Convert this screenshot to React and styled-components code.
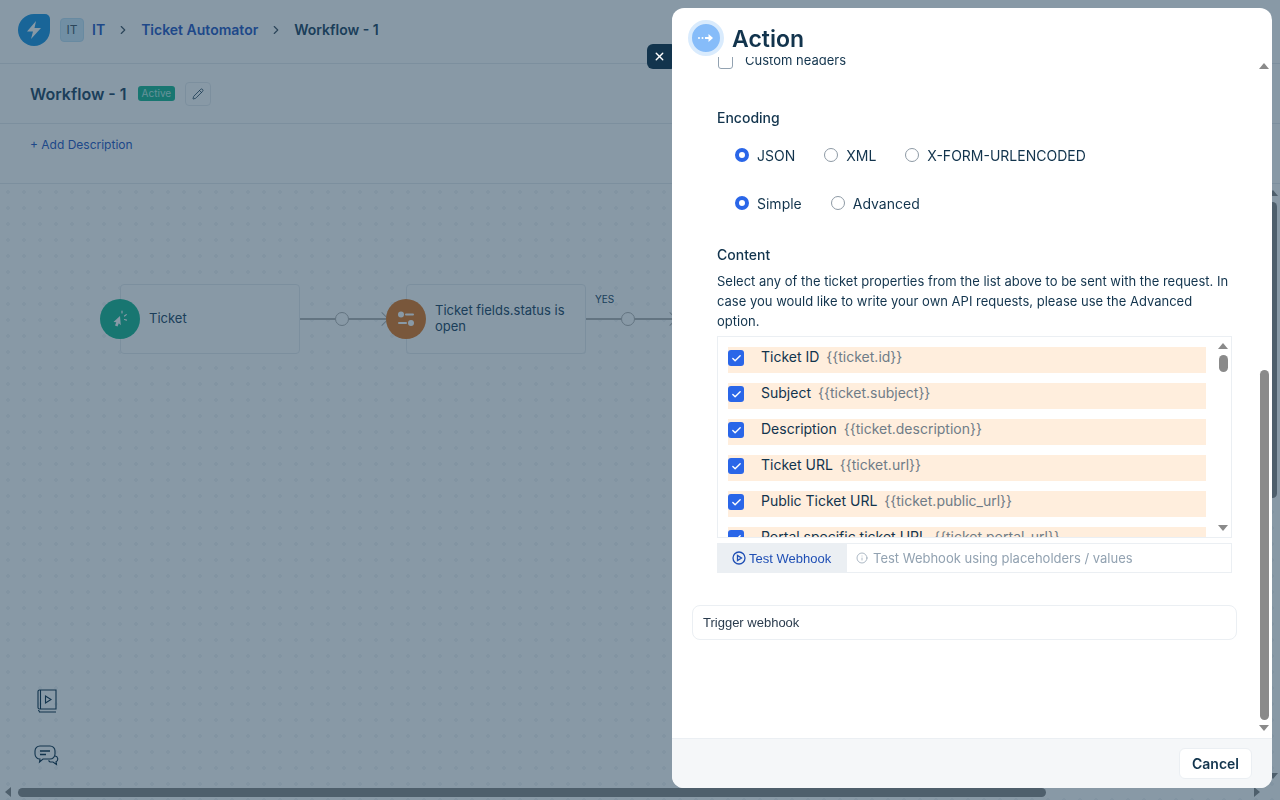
import React from "react";
import styled, { createGlobalStyle } from "styled-components";
import { Check, ChevronRight, Info, Pencil, X } from "lucide-react";

const GlobalStyle = createGlobalStyle`
  html, body {
    margin: 0;
    height: 100%;
    overflow: hidden;
    background: #fff;
    font-family: Inter, "Liberation Sans", sans-serif;
    color: #12344d;
  }
  * {
    box-sizing: border-box;
  }
`;

const Page = styled.div`
  width: 1280px;
  height: 800px;
  display: flex;
  flex-direction: column;
  overflow: hidden;
`;

const TopBar = styled.header`
  height: 64px;
  flex: none;
  display: flex;
  align-items: center;
  padding: 0 0 4px 18px;
  border-bottom: 1px solid #e6ebef;
`;

const Logo = styled.div`
  width: 32px;
  height: 32px;
  margin-right: 10px;
  border-radius: 50% 5px 50% 50%;
  background: #2097e2;
  display: flex;
  align-items: center;
  justify-content: center;
`;

const SpaceBadge = styled.span`
  width: 24px;
  height: 24px;
  margin-right: 8px;
  border-radius: 4px;
  background: #d0eafa;
  border: 1px solid #bfe0f5;
  font-size: 12px;
  color: #475867;
  display: flex;
  align-items: center;
  justify-content: center;
`;

const Crumb = styled.span`
  font-size: 14px;
  font-weight: 600;
  color: ${(p) => (p.$current ? "#264966" : "#2c5cc5")};
`;

const CrumbSep = styled.span`
  width: 18px;
  margin: 0 9px;
  display: flex;
  justify-content: center;
  color: #475867;
`;

const TitleBar = styled.div`
  height: 60px;
  flex: none;
  display: flex;
  align-items: center;
  padding-left: 30px;
  border-bottom: 1px solid #e6ebef;
`;

const Title = styled.h1`
  margin: 0 11px 0 0;
  font-size: 16px;
  font-weight: 600;
  color: #264966;
`;

const StatusBadge = styled.span`
  height: 15px;
  padding: 0 4px;
  margin-right: 10px;
  border-radius: 3px;
  background: #1fb895;
  color: #b9f0e4;
  font-size: 10px;
  line-height: 15px;
`;

const EditButton = styled.span`
  width: 26px;
  height: 24px;
  border: 1px solid #e6ebef;
  border-radius: 4px;
  display: flex;
  align-items: center;
  justify-content: center;
  color: #12344d;
`;

const DescBar = styled.div`
  height: 60px;
  flex: none;
  display: flex;
  align-items: flex-start;
  padding: 13px 0 0 30px;
  border-bottom: 1px solid #e6ebef;
  font-size: 12px;
  line-height: 16px;
  color: #2c5cc5;
`;

const Canvas = styled.main`
  position: relative;
  flex: 1;
  background-color: #fff;
  background-image: radial-gradient(#f3f5f7 2px, transparent 2px);
  background-size: 16px 16px;
`;

const Node = styled.div`
  position: absolute;
  top: ${(p) => p.$y}px;
  left: ${(p) => p.$x}px;
  width: 180px;
  height: 70px;
  padding: 0 16px 2px 28px;
  display: flex;
  align-items: center;
  border: 1px solid #e6ebef;
  border-radius: 4px;
  background: #fff;
  font-size: 13px;
  line-height: 16px;
  color: #264966;
`;

const NodeIcon = styled.span`
  position: absolute;
  left: -21px;
  top: 14px;
  width: 40px;
  height: 40px;
  border-radius: 50%;
  background: ${(p) => p.$color};
  display: flex;
  align-items: center;
  justify-content: center;
`;

const Wire = styled.div`
  position: absolute;
  top: ${(p) => p.$y}px;
  left: ${(p) => p.$x}px;
  width: ${(p) => p.$w}px;
  height: 2px;
  background: #b4b4b4;
`;

const WireDot = styled.span`
  position: absolute;
  left: 35px;
  top: -6px;
  width: 14px;
  height: 14px;
  border-radius: 50%;
  border: 1.5px solid #b4b4b4;
  background: #fff;
`;

const WireHead = styled.span`
  position: absolute;
  right: -1px;
  top: -4px;
  width: 10px;
  height: 10px;
  border-top: 1.5px solid #b4b4b4;
  border-right: 1.5px solid #b4b4b4;
  transform: rotate(45deg);
`;

const WireLabel = styled.span`
  position: absolute;
  left: 595px;
  top: 109px;
  font-size: 10px;
  line-height: 12px;
  color: #264966;
`;

const FloatIcon = styled.span`
  position: absolute;
  left: ${(p) => p.$x}px;
  top: ${(p) => p.$y}px;
  display: flex;
  color: #12344d;
`;

const PageThumb = styled.div`
  position: absolute;
  border-radius: 5px;
  background: #8a8a8a;
  ${(p) =>
    p.$vertical
      ? "right: 3px; top: 18px; width: 9px; height: 296px;"
      : "left: 18px; top: 604px; width: 1028px; height: 9px;"}
`;

const Arrow = styled.span`
  position: absolute;
  left: ${(p) => p.$x}px;
  top: ${(p) => p.$y}px;
  width: 0;
  height: 0;
  border: 5px solid transparent;
  ${(p) => `border-${p.$side}-color: ${p.$color};`}
  ${(p) => `border-${p.$side}-width: 6px;`}
`;

const Overlay = styled.div`
  position: fixed;
  inset: 0;
  background: rgba(18, 52, 77, 0.5);
`;

const CloseTab = styled.button`
  position: fixed;
  left: 647px;
  top: 44px;
  width: 30px;
  height: 25px;
  padding: 0 5px 0 0;
  border: 0;
  border-radius: 6px;
  background: #12344d;
  color: #fff;
  display: flex;
  align-items: center;
  justify-content: center;
`;

const Modal = styled.aside`
  position: fixed;
  left: 672px;
  top: 8px;
  width: 600px;
  height: 780px;
  border-radius: 12px;
  background: #fff;
  display: flex;
  flex-direction: column;
  overflow: hidden;
`;

const ModalHeader = styled.div`
  height: 49px;
  flex: none;
  padding: 12px 0 0 16px;
  display: flex;
  align-items: flex-start;
  gap: 8px;
`;

const HeaderIcon = styled.span`
  width: 36px;
  height: 36px;
  flex: none;
  border-radius: 50%;
  background: #86bcf9;
  border: 4px solid #d9ebfd;
  display: flex;
  align-items: center;
  justify-content: center;
`;

const ModalTitle = styled.h2`
  margin: 1px 0 0;
  font-size: 23px;
  font-weight: 600;
  line-height: 36px;
  color: #12344d;
`;

const ModalBody = styled.div`
  position: relative;
  flex: 1;
  overflow: hidden;
`;

const ScrollContent = styled.div`
  margin-top: -4px;
  padding: 0 40px 0 20px;
`;

const Section = styled.div`
  padding-left: 25px;
`;

const HeaderCheckRow = styled.label`
  height: 16px;
  display: flex;
  align-items: center;
  gap: 12px;
  margin-left: 1px;
  font-size: 13px;
  line-height: 14px;
  color: #12344d;
`;

const EmptyBox = styled.span`
  width: 15px;
  height: 16px;
  flex: none;
  border: 1px solid #92a2b1;
  border-radius: 3px;
`;

const HeaderCheckText = styled.span`
  margin-bottom: 2px;
`;

const Label = styled.div`
  font-size: 14px;
  font-weight: 500;
  line-height: 20px;
  color: #12344d;
  margin-top: ${(p) => p.$top}px;
`;

const RadioRow = styled.div`
  height: 20px;
  margin-top: ${(p) => p.$top}px;
  padding-left: 18px;
  display: flex;
  align-items: center;
  gap: 29px;
`;

const RadioItem = styled.label`
  display: flex;
  align-items: center;
  gap: 8px;
  font-size: 14px;
  color: #12344d;
`;

const RadioDot = styled.span`
  width: 14px;
  height: 14px;
  border-radius: 50%;
  background: #fff;
  border: ${(p) => (p.$on ? "4px solid #2a66e8" : "1px solid #8e9aa5")};
`;

const HelpText = styled.p`
  margin: 6px 0 5px;
  font-size: 13px;
  line-height: 20px;
  color: #12344d;
`;

const PropList = styled.div`
  position: relative;
  width: 515px;
  height: 202px;
  padding: 10px 0 0 10px;
  border: 1px solid #ebeff3;
  overflow: hidden;
`;

const PropRow = styled.div`
  width: 478px;
  height: 26px;
  margin-bottom: 10px;
  padding: 0 0 7px 33px;
  display: flex;
  align-items: center;
  gap: 7px;
  position: relative;
  background: #ffeedd;
  font-size: 14px;
  color: #12344d;
`;

const PropCheck = styled.span`
  position: absolute;
  left: 0;
  top: 3px;
  width: 16px;
  height: 16px;
  border-radius: 3px;
  background: #2a66e8;
  color: #fff;
  display: flex;
  align-items: center;
  justify-content: center;
`;

const PropKey = styled.span`
  color: #6f7c87;
`;

const ListThumb = styled.span`
  position: absolute;
  right: 3px;
  top: 18px;
  width: 9px;
  height: 17px;
  border-radius: 5px;
  background: #8a8a8a;
`;

const WebhookBar = styled.div`
  width: 515px;
  height: 30px;
  margin-top: 5px;
  display: flex;
  border: 1px solid #ebeff3;
`;

const WebhookButton = styled.span`
  width: 130px;
  flex: none;
  margin: -1px 0 -1px -1px;
  padding-left: 15px;
  background: #ebeff3;
  display: flex;
  align-items: center;
  gap: 3px;
  font: 13px "Liberation Sans", Arial, sans-serif;
  color: #1f4fb5;
`;

const WebhookHint = styled.span`
  padding-left: 9px;
  display: flex;
  align-items: center;
  gap: 5px;
  font-size: 13px;
  color: #92a2b1;
`;

const NameInput = styled.div`
  width: 545px;
  height: 35px;
  margin-top: 32px;
  padding-left: 10px;
  display: flex;
  align-items: center;
  border: 1px solid #ebeff3;
  border-radius: 8px;
  font: 13px "Liberation Sans", Arial, sans-serif;
  color: #2a3b4d;
`;

const ScrollThumb = styled.span`
  position: absolute;
  left: 588px;
  top: 313px;
  width: 9px;
  height: 350px;
  border-radius: 5px;
  background: #8a8a8a;
`;

const ModalFooter = styled.footer`
  height: 50px;
  flex: none;
  padding-right: 20px;
  display: flex;
  align-items: center;
  justify-content: flex-end;
  background: #f5f7f9;
  border-top: 1px solid #ebeff3;
`;

const CancelButton = styled.button`
  width: 73px;
  height: 31px;
  border: 1px solid #ebeff3;
  border-radius: 6px;
  background: #fff;
  font: 600 14px Inter, "Liberation Sans", sans-serif;
  color: #12344d;
`;

const properties = [
  ["Ticket ID", "{{ticket.id}}"],
  ["Subject", "{{ticket.subject}}"],
  ["Description", "{{ticket.description}}"],
  ["Ticket URL", "{{ticket.url}}"],
  ["Public Ticket URL", "{{ticket.public_url}}"],
  ["Portal specific ticket URL", "{{ticket.portal_url}}"],
];

function Radio({ label, on }) {
  return (
    <RadioItem>
      <RadioDot $on={on} />
      {label}
    </RadioItem>
  );
}

export default function App() {
  return (
    <>
      <GlobalStyle />
      <Page>
        <TopBar>
          <Logo>
            <svg width="18" height="20" viewBox="0 0 18 20">
              <path d="M11 1 2 11.5h6L6 19l10-11h-6.5L11 1Z" fill="#fff" />
            </svg>
          </Logo>
          <SpaceBadge>IT</SpaceBadge>
          <Crumb>IT</Crumb>
          <CrumbSep>
            <ChevronRight size={14} />
          </CrumbSep>
          <Crumb>Ticket Automator</Crumb>
          <CrumbSep>
            <ChevronRight size={14} />
          </CrumbSep>
          <Crumb $current>Workflow - 1</Crumb>
        </TopBar>
        <TitleBar>
          <Title>Workflow - 1</Title>
          <StatusBadge>Active</StatusBadge>
          <EditButton>
            <Pencil size={12} strokeWidth={1.5} />
          </EditButton>
        </TitleBar>
        <DescBar>+ Add Description</DescBar>
        <Canvas>
          <Node $x={120} $y={100}>
            <NodeIcon $color="#1fb895">
              <svg width="18" height="18" viewBox="0 0 18 18" fill="#fff">
                <path d="M9 6 2.500 12l2.800.3L4 15.500l2.500 1 1.300-3.200 2 2L9 6Z" />
                <path
                  d="M11 3V1M13.500 6l1.800-1.400M13.500 9.500l2 .6"
                  stroke="#fff"
                  strokeWidth="1.200"
                  strokeLinecap="round"
                />
              </svg>
            </NodeIcon>
            Ticket
          </Node>
          <Wire $x={300} $y={134} $w={86}>
            <WireDot />
            <WireHead />
          </Wire>
          <Node $x={406} $y={100}>
            <NodeIcon $color="#e07b29">
              <svg width="18" height="16" viewBox="0 0 18 16" fill="#fff">
                <circle cx="4" cy="3.500" r="3" />
                <rect x="8" y="2.500" width="9" height="2" rx="1" />
                <rect x="1" y="11" width="9" height="2" rx="1" />
                <circle cx="14" cy="12" r="3" />
              </svg>
            </NodeIcon>
            Ticket fields.status is open
          </Node>
          <WireLabel>YES</WireLabel>
          <Wire $x={586} $y={134} $w={88}>
            <WireDot />
            <WireHead />
          </Wire>
          <FloatIcon $x={37} $y={505}>
            <svg width="20" height="24" viewBox="0 0 20 24" fill="none" stroke="currentColor" strokeWidth="1.100">
              <path d="M2.500 1H19v19H2.500A1.500 1.500 0 0 1 1 18.500v-16A1.500 1.500 0 0 1 2.500 1Z" />
              <path d="M1 21.500A1.500 1.500 0 0 1 2.500 23H19M3.500 1v19" />
              <path d="M8.500 7v7l5.500-3.500L8.500 7Z" />
            </svg>
          </FloatIcon>
          <FloatIcon $x={34} $y={561}>
            <svg width="26" height="24" viewBox="0 0 26 24" fill="none" stroke="currentColor" strokeWidth="1.100">
              <path d="M6 1h10a5 5 0 0 1 5 5v3a5 5 0 0 1-5 5H9l-3.500 3 .5-3a5 5 0 0 1-5-5V6a5 5 0 0 1 5-5Z" />
              <path d="M6 6h10M6 9.500h6" strokeWidth="1.400" />
              <path d="M21 11a3 3 0 0 1 1 5.700l.5 2.800-3.500-2.500h-3l-1.500-1.500" />
            </svg>
          </FloatIcon>
          <PageThumb />
          <PageThumb $vertical />
          <Arrow $x={0} $y={603} $side="right" $color="#8a8a8a" />
          <Arrow $x={1254} $y={603} $side="left" $color="#8a8a8a" />
          <Arrow $x={1268} $y={1} $side="bottom" $color="#8a8a8a" />
          <Arrow $x={1268} $y={589} $side="top" $color="#8a8a8a" />
        </Canvas>
      </Page>
      <Overlay />
      <CloseTab>
        <X size={13} strokeWidth={2.5} />
      </CloseTab>
      <Modal>
        <ModalHeader>
          <HeaderIcon>
            <svg width="16" height="12" viewBox="0 0 16 12" fill="#fff">
              <rect x="0" y="5" width="2" height="2" rx="1" />
              <rect x="3.500" y="5" width="2" height="2" rx="1" />
              <path d="M7 5h3.500V2l4.500 4-4.500 4V7H7V5Z" />
            </svg>
          </HeaderIcon>
          <ModalTitle>Action</ModalTitle>
        </ModalHeader>
        <ModalBody>
          <ScrollContent>
            <Section>
              <HeaderCheckRow>
                <EmptyBox />
                <HeaderCheckText>Custom headers</HeaderCheckText>
              </HeaderCheckRow>
              <Label $top={39}>Encoding</Label>
              <RadioRow $top={17}>
                <Radio label="JSON" on />
                <Radio label="XML" />
                <Radio label="X-FORM-URLENCODED" />
              </RadioRow>
              <RadioRow $top={28}>
                <Radio label="Simple" on />
                <Radio label="Advanced" />
              </RadioRow>
              <Label $top={32}>Content</Label>
              <HelpText>
                Select any of the ticket properties from the list above to be sent with the request. In
                case you would like to write your own API requests, please use the Advanced option.
              </HelpText>
              <PropList>
                {properties.map(([name, key]) => (
                  <PropRow key={key}>
                    <PropCheck>
                      <Check size={11} strokeWidth={3} />
                    </PropCheck>
                    {name}
                    <PropKey>{key}</PropKey>
                  </PropRow>
                ))}
                <Arrow $x={500} $y={1} $side="bottom" $color="#8a8a8a" />
                <ListThumb />
                <Arrow $x={500} $y={188} $side="top" $color="#8a8a8a" />
              </PropList>
              <WebhookBar>
                <WebhookButton>
                  <svg width="14" height="14" viewBox="0 0 14 14" fill="none" stroke="currentColor" strokeWidth="1.300">
                    <circle cx="7" cy="7" r="6" />
                    <path d="M5.500 4.500v5l4-2.500-4-2.500Z" />
                  </svg>
                  Test Webhook
                </WebhookButton>
                <WebhookHint>
                  <Info size={12} strokeWidth={1.5} />
                  Test Webhook using placeholders / values
                </WebhookHint>
              </WebhookBar>
            </Section>
            <NameInput>Trigger webhook</NameInput>
          </ScrollContent>
          <Arrow $x={587} $y={1} $side="bottom" $color="#8a8a8a" />
          <ScrollThumb />
          <Arrow $x={587} $y={668} $side="top" $color="#8a8a8a" />
        </ModalBody>
        <ModalFooter>
          <CancelButton>Cancel</CancelButton>
        </ModalFooter>
      </Modal>
    </>
  );
}
